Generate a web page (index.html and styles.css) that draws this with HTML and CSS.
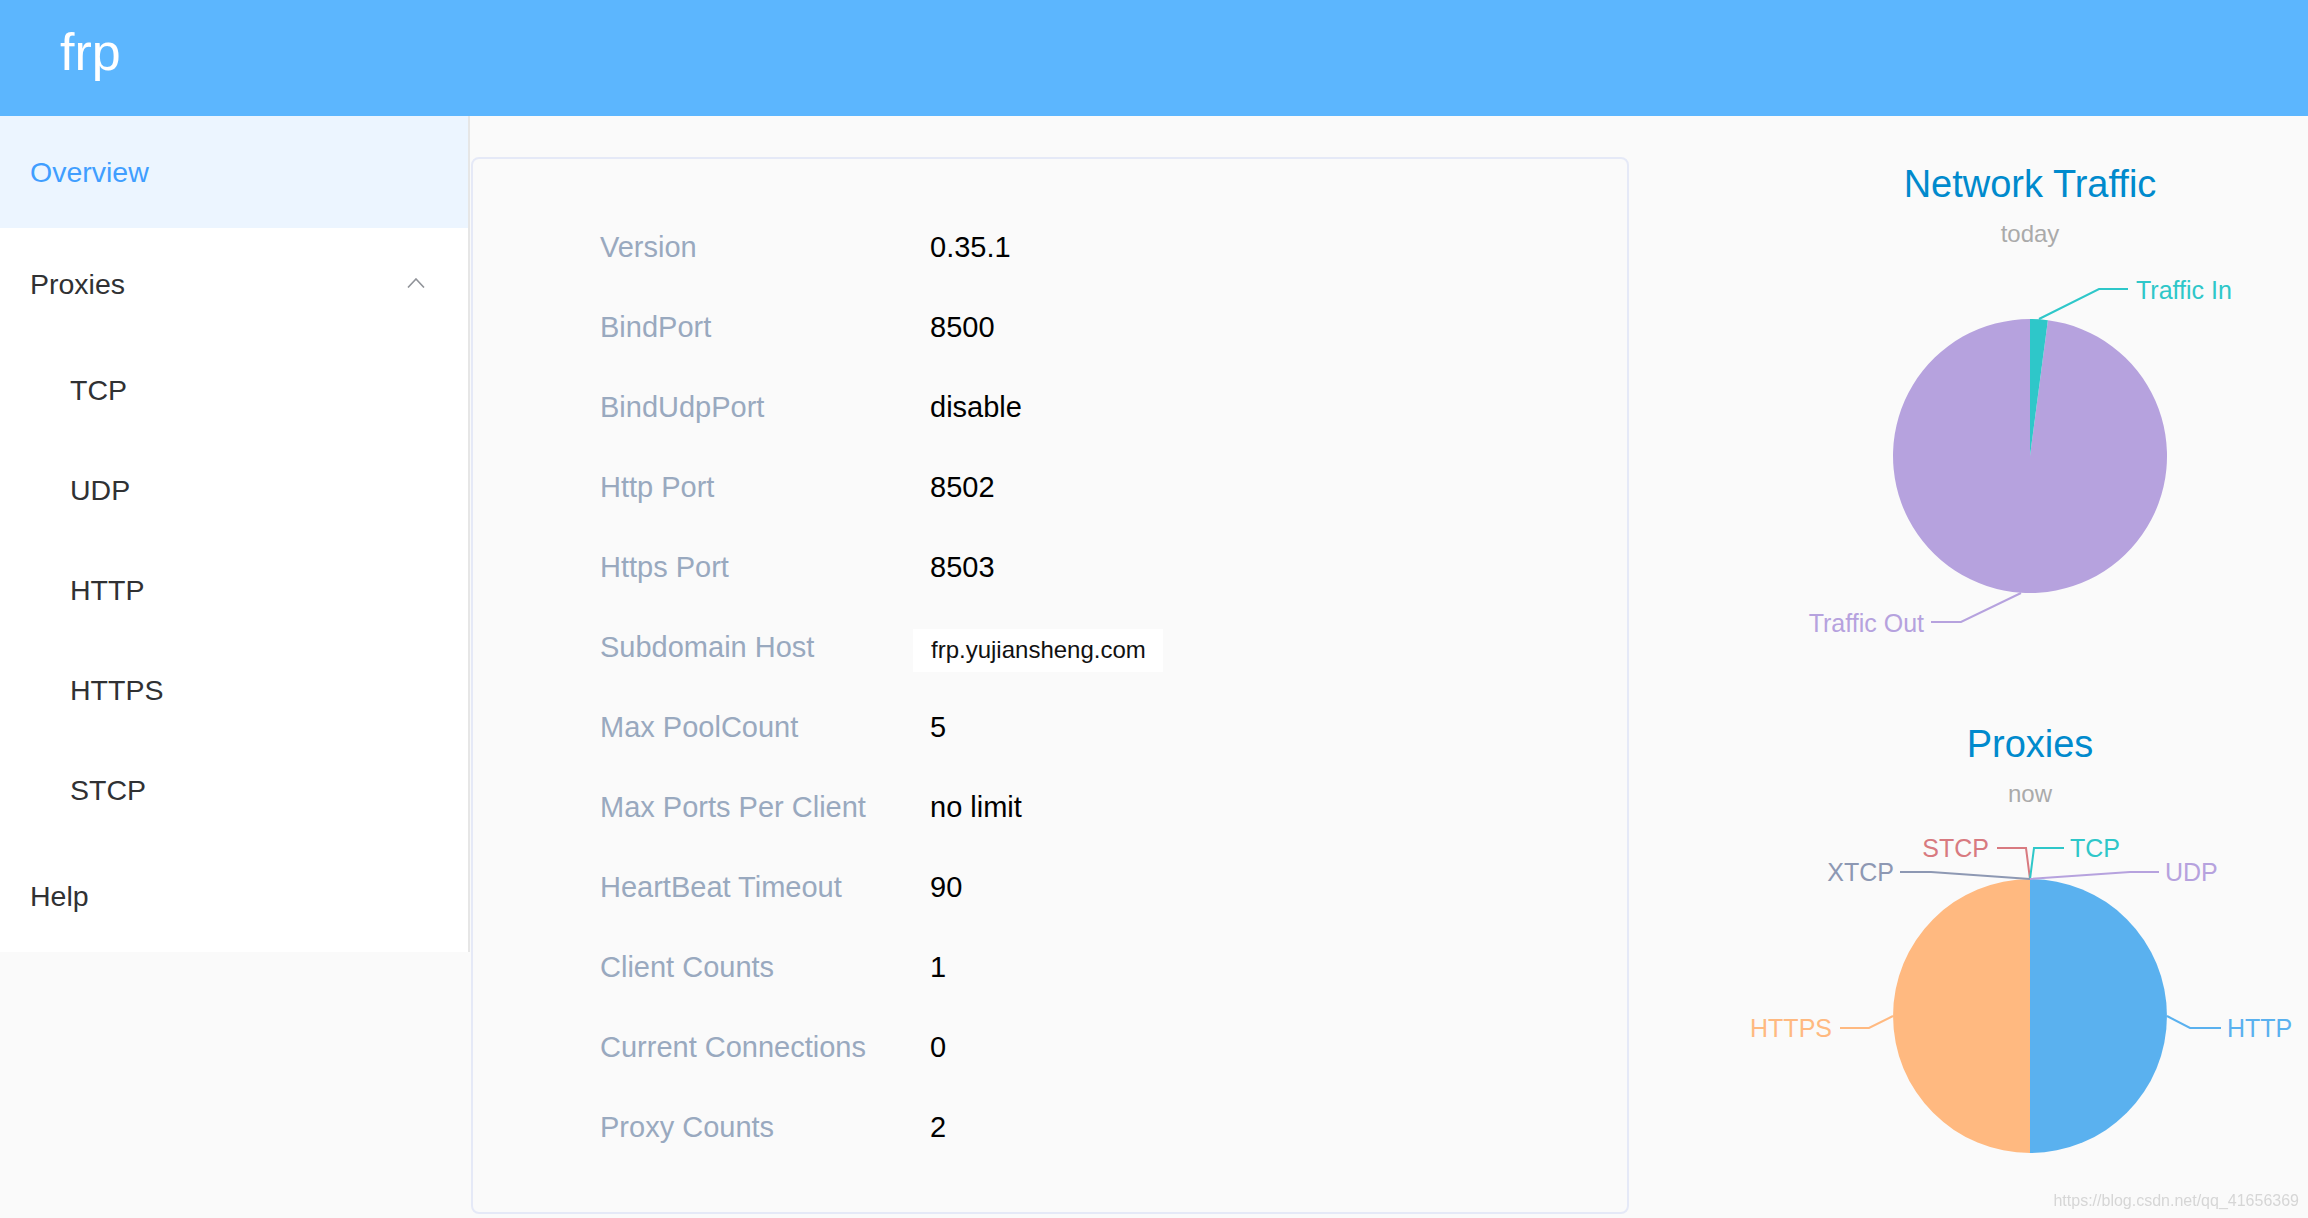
FILE: index.html
```html
<!DOCTYPE html>
<html lang="en">
<head>
<meta charset="utf-8">
<title>frp dashboard</title>
<link rel="stylesheet" href="styles.css">
</head>
<body>
<header class="topbar"><span class="brand">frp</span></header>
<div class="layout">
  <aside class="sidebar">
    <ul class="menu">
      <li class="menu-item is-active">Overview</li>
      <li class="submenu">
        <div class="submenu-title">
          <span>Proxies</span>
          <svg class="arrow" viewBox="0 0 18 10" width="18" height="10" aria-hidden="true"><polyline points="1,9.5 9,1 17,9.5"/></svg>
        </div>
        <ul class="submenu-list">
          <li class="menu-item sub">TCP</li>
          <li class="menu-item sub">UDP</li>
          <li class="menu-item sub">HTTP</li>
          <li class="menu-item sub">HTTPS</li>
          <li class="menu-item sub">STCP</li>
        </ul>
      </li>
      <li class="menu-item">Help</li>
    </ul>
  </aside>
  <main class="content">
    <section class="info-card">
      <dl class="info-list">
        <div class="info-row"><dt>Version</dt><dd>0.35.1</dd></div>
        <div class="info-row"><dt>BindPort</dt><dd>8500</dd></div>
        <div class="info-row"><dt>BindUdpPort</dt><dd>disable</dd></div>
        <div class="info-row"><dt>Http Port</dt><dd>8502</dd></div>
        <div class="info-row"><dt>Https Port</dt><dd>8503</dd></div>
        <div class="info-row"><dt>Subdomain Host</dt><dd><span class="tag">frp.yujiansheng.com</span></dd></div>
        <div class="info-row"><dt>Max PoolCount</dt><dd>5</dd></div>
        <div class="info-row"><dt>Max Ports Per Client</dt><dd>no limit</dd></div>
        <div class="info-row"><dt>HeartBeat Timeout</dt><dd>90</dd></div>
        <div class="info-row"><dt>Client Counts</dt><dd>1</dd></div>
        <div class="info-row"><dt>Current Connections</dt><dd>0</dd></div>
        <div class="info-row"><dt>Proxy Counts</dt><dd>2</dd></div>
      </dl>
    </section>
    <section class="charts">
      <figure class="chart">
        <svg viewBox="0 0 679 560" width="679" height="560" role="img" aria-label="Network Traffic">
          <text class="chart-title" x="401" y="61" text-anchor="middle">Network Traffic</text>
          <text class="chart-sub" x="401" y="106" text-anchor="middle">today</text>
          <path d="M401 320 L418.88 184.17 A137 137 0 1 1 401 183 Z" fill="#b6a2de"/>
          <path d="M401 320 L401 183 A137 137 0 0 1 418.88 184.17 Z" fill="#2ec7c9"/>
          <polyline class="lbl-line" points="410,183 470,153 499,153" stroke="#2ec7c9"/>
          <text class="chart-label" x="507" y="163" fill="#2ec7c9">Traffic In</text>
          <polyline class="lbl-line" points="392,457 332,486 302,486" stroke="#b6a2de"/>
          <text class="chart-label" x="295" y="496" text-anchor="end" fill="#b6a2de">Traffic Out</text>
        </svg>
      </figure>
      <figure class="chart">
        <svg viewBox="0 0 679 560" width="679" height="560" role="img" aria-label="Proxies">
          <text class="chart-title" x="401" y="61" text-anchor="middle">Proxies</text>
          <text class="chart-sub" x="401" y="106" text-anchor="middle">now</text>
          <path d="M401 183 A137 137 0 0 1 401 457 Z" fill="#5ab1ef"/>
          <path d="M401 457 A137 137 0 0 1 401 183 Z" fill="#ffb980"/>
          <polyline class="lbl-line" points="401,183 397,152 368,152" stroke="#d87a80"/>
          <text class="chart-label" x="360" y="161" text-anchor="end" fill="#d87a80">STCP</text>
          <polyline class="lbl-line" points="401,183 405,152 435,152" stroke="#2ec7c9"/>
          <text class="chart-label" x="441" y="161" fill="#2ec7c9">TCP</text>
          <polyline class="lbl-line" points="401,183 302,176 271,176" stroke="#8d98b3"/>
          <text class="chart-label" x="265" y="185" text-anchor="end" fill="#8d98b3">XTCP</text>
          <polyline class="lbl-line" points="401,183 501,176 530,176" stroke="#b6a2de"/>
          <text class="chart-label" x="536" y="185" fill="#b6a2de">UDP</text>
          <polyline class="lbl-line" points="264,320 240,332 211,332" stroke="#ffb980"/>
          <text class="chart-label" x="203" y="341" text-anchor="end" fill="#ffb980">HTTPS</text>
          <polyline class="lbl-line" points="538,320 561,332 592,332" stroke="#5ab1ef"/>
          <text class="chart-label" x="598" y="341" fill="#5ab1ef">HTTP</text>
        </svg>
      </figure>
    </section>
  </main>
</div>
<div class="watermark">https://blog.csdn.net/qq_41656369</div>
</body>
</html>
```
FILE: styles.css
```css
* { box-sizing: border-box; }
html, body { margin: 0; padding: 0; height: 100%; overflow: hidden; }
body {
  font-family: "Liberation Sans", Arial, Helvetica, sans-serif;
  background: #fafafa;
  color: #303133;
}
.topbar {
  height: 116px;
  background: #5cb6fe;
  padding-left: 60px;
}
.brand {
  display: block;
  color: #fff;
  font-size: 52px;
  line-height: 104px;
}
.layout {
  display: flex;
  height: 1102px;
  overflow: hidden;
}
.sidebar {
  width: 470px;
  flex: none;
}
.menu, .submenu-list {
  list-style: none;
  margin: 0;
  padding: 0;
}
.menu {
  background: #fff;
  border-right: 2px solid #e6e6e6;
}
.menu-item {
  height: 112px;
  line-height: 112px;
  padding-left: 30px;
  font-size: 28.5px;
  color: #303133;
}
.menu-item.is-active {
  background: #ecf5ff;
  color: #409eff;
}
.submenu-title {
  height: 112px;
  display: flex;
  align-items: center;
  justify-content: space-between;
  padding: 0 43px 0 30px;
  font-size: 28.5px;
  color: #303133;
}
.arrow {
  display: block;
  margin-top: -2px;
}
.arrow polyline {
  fill: none;
  stroke: #909399;
  stroke-width: 1.6;
}
.menu-item.sub {
  height: 100px;
  line-height: 100px;
  padding-left: 70px;
}
.content {
  flex: 1;
  display: flex;
  min-width: 0;
}
.info-card {
  width: 1158px;
  height: 1057px;
  flex: none;
  margin: 41px 0 0 1px;
  border: 2px solid #e5e9f7;
  border-radius: 8px;
  background: #fafafa;
  padding: 48px 0 0 127px;
}
.info-list { margin: 0; }
.info-row {
  display: flex;
  align-items: center;
  height: 80px;
  font-size: 29px;
}
.info-row dt {
  width: 330px;
  flex: none;
  color: #99a9bf;
}
.info-row dd {
  margin: 0;
  color: #000;
}
.tag {
  display: inline-flex;
  align-items: center;
  height: 43px;
  margin: 6px 0 0 -17px;
  padding: 0 17px 0 18px;
  background: #fff;
  font-size: 24px;
  color: #111;
}
.charts {
  flex: 1;
  min-width: 0;
  padding-top: 20px;
  overflow: hidden;
}
.chart {
  margin: 0;
  display: block;
}
.chart svg { display: block; }
.chart-title {
  font-size: 38px;
  fill: #008acd;
}
.chart-sub {
  font-size: 24px;
  fill: #aaa;
}
.chart-label {
  font-size: 25px;
}
.lbl-line {
  fill: none;
  stroke-width: 2;
}
.watermark {
  position: fixed;
  right: 9px;
  bottom: 8px;
  font-size: 16px;
  color: #d6d6d6;
}
```
